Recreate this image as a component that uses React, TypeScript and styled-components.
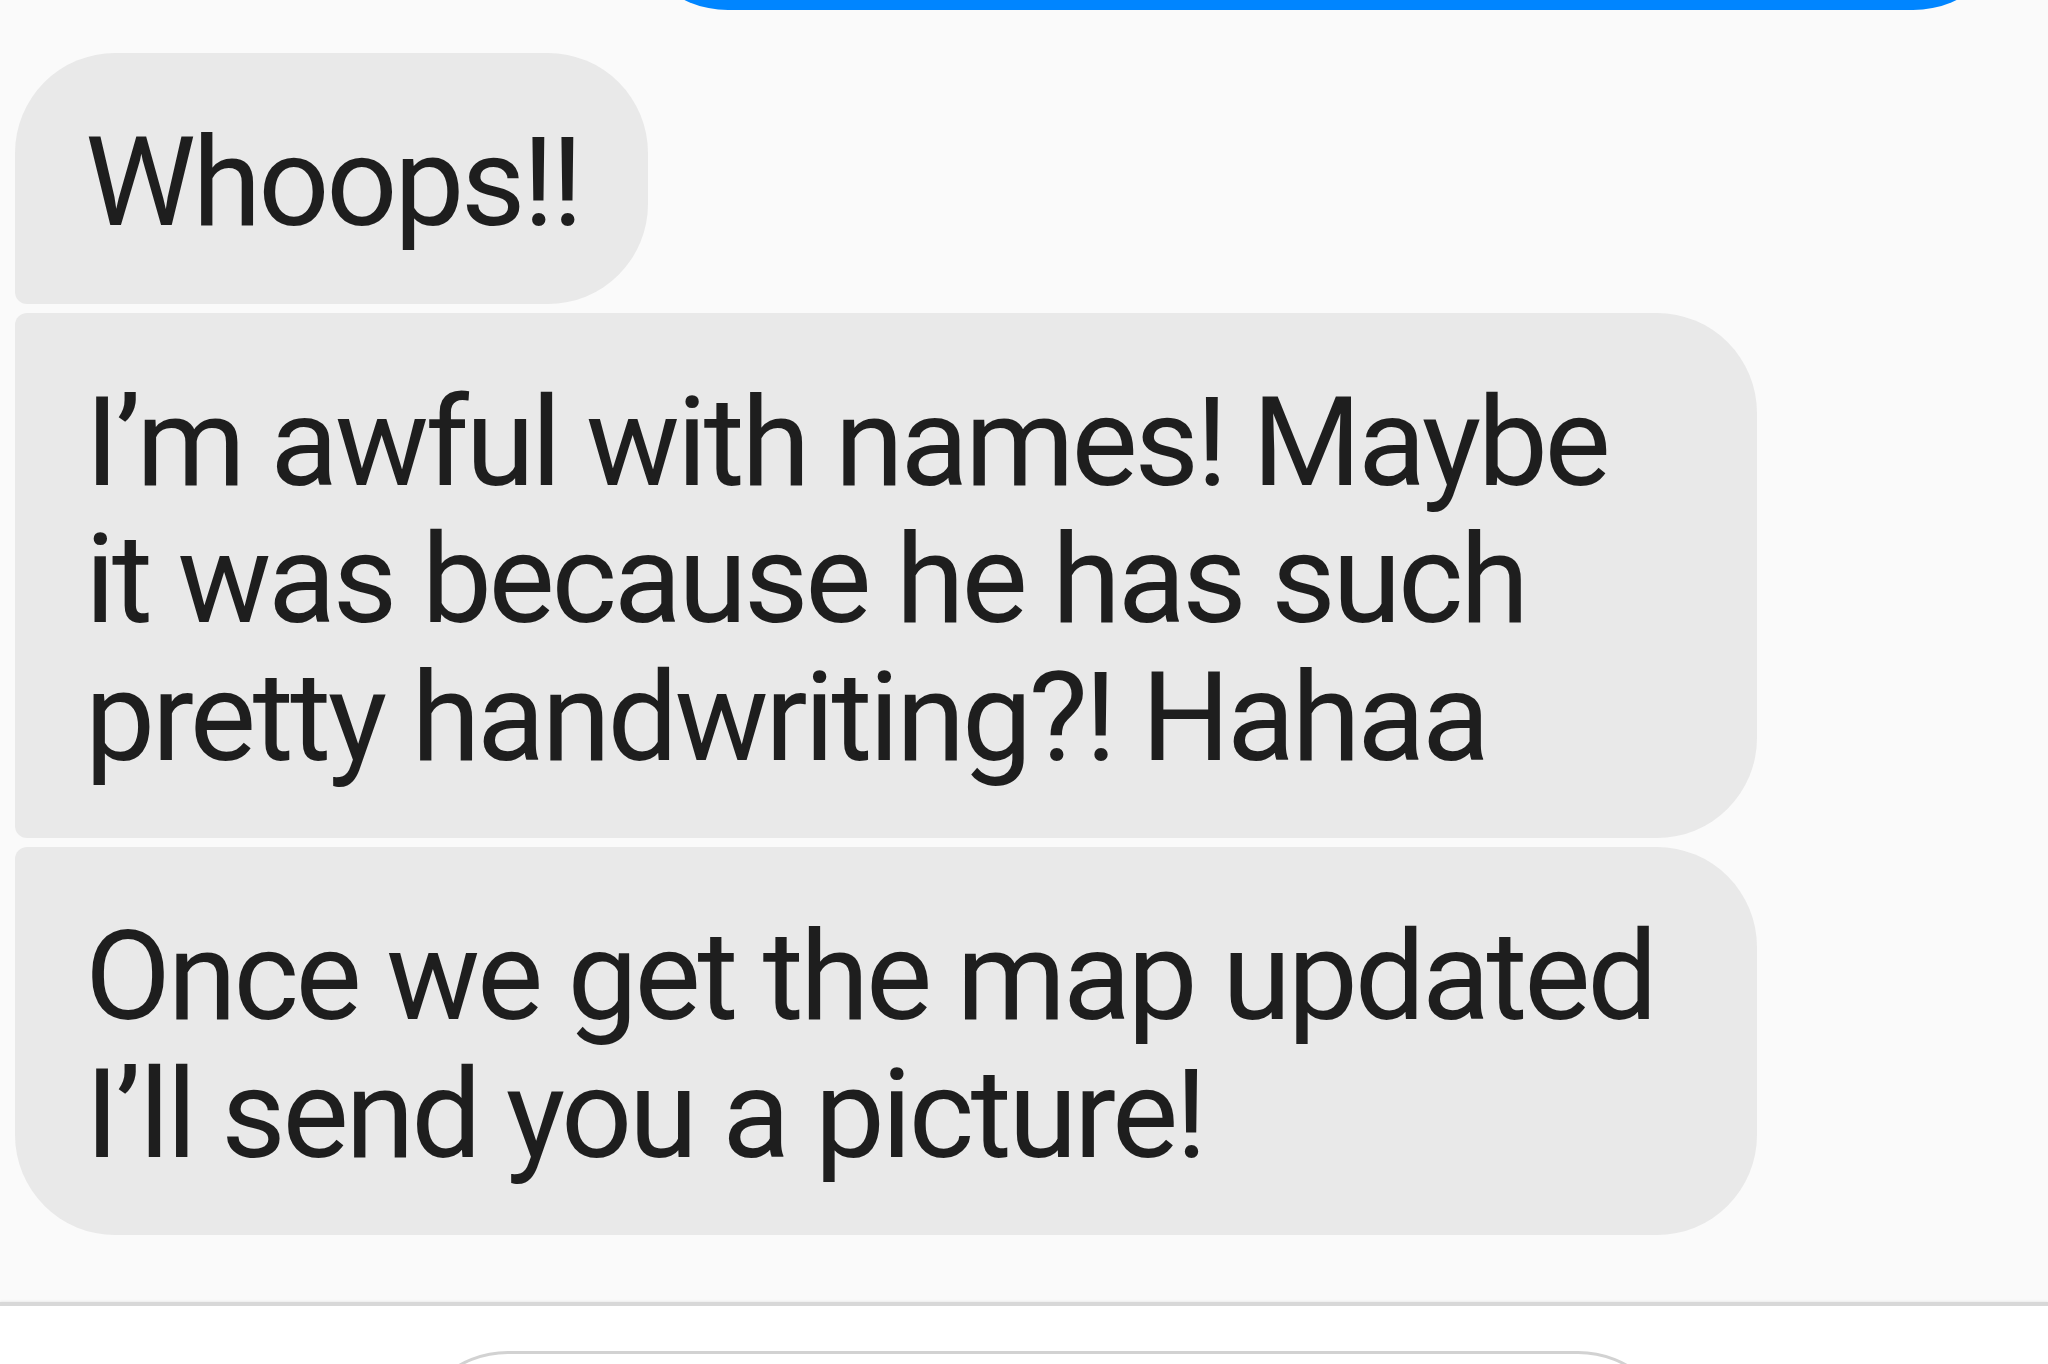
import React from 'react';
import styled, { createGlobalStyle } from 'styled-components';

type Message = {
  id: number;
  text: string;
};

const incoming: Message[] = [
  { id: 0, text: 'Whoops!!' },
  {
    id: 1,
    text: 'I’m awful with names! Maybe it was because he has such pretty handwriting?! Hahaa',
  },
  { id: 2, text: 'Once we get the map updated I’ll send you a picture!' },
];

const GlobalStyle = createGlobalStyle`
  html, body {
    margin: 0;
    padding: 0;
    background: #fafafa;
  }
  body {
    font-family: Roboto, "Noto Sans", "Liberation Sans", sans-serif;
  }
`;

type Side = 'in' | 'out';
type Pos = 'first' | 'middle' | 'last' | 'single';

const BIG = 100;
const SMALL = 12;

// top-left / bottom-left corners change with the place in a group
const leftCorners = (pos: Pos): [number, number] => {
  switch (pos) {
    case 'first':
      return [BIG, SMALL];
    case 'middle':
      return [SMALL, SMALL];
    case 'last':
      return [SMALL, BIG];
    default:
      return [BIG, BIG];
  }
};

const App = () => {
  return (
    <>
      <GlobalStyle />
      <S.Screen>
        <S.Thread>
          <S.Group $side="out">
            <S.OutBubble />
          </S.Group>
          <S.Group $side="in">
            {incoming.map((msg, i) => (
              <S.Bubble
                key={msg.id}
                $pos={i === 0 ? 'first' : i === incoming.length - 1 ? 'last' : 'middle'}
              >
                {msg.text}
              </S.Bubble>
            ))}
          </S.Group>
        </S.Thread>
        <S.Composer>
          <S.InputBox />
        </S.Composer>
      </S.Screen>
    </>
  );
};

const S = {
  Screen: styled.div`
    width: 2048px;
    height: 1364px;
    overflow: hidden;
    display: flex;
    flex-direction: column;
  `,
  Thread: styled.div`
    height: 1302px;
    flex-shrink: 0;
    overflow: hidden;
    background: #fafafa;
    display: flex;
    flex-direction: column;
    justify-content: flex-end;
    gap: 43px;
    padding-bottom: 67px;
    box-sizing: border-box;
  `,
  Group: styled.div<{ $side: Side }>`
    display: flex;
    flex-direction: column;
    gap: 9px;
    align-items: ${(p) => (p.$side === 'in' ? 'flex-start' : 'flex-end')};
    padding: ${(p) => (p.$side === 'in' ? '0 0 0 15px' : '0 35px 0 0')};
  `,
  Bubble: styled.div<{ $pos: Pos }>`
    box-sizing: border-box;
    max-width: 1742px;
    padding: 61px 68px 52px 70px;
    font-size: 125px;
    line-height: 137.5px;
    letter-spacing: -3.3px;
    color: #1e1e1e;
    background: #e9e9e9;
    border-radius: ${(p) => {
      const [tl, bl] = leftCorners(p.$pos);
      return `${tl}px ${BIG}px ${BIG}px ${bl}px`;
    }};
  `,
  OutBubble: styled.div`
    width: 1385px;
    height: 300px;
    flex-shrink: 0;
    background: #0085ff;
    border-radius: ${BIG}px;
  `,
  Composer: styled.div`
    flex: 1;
    background: #ffffff;
    border-top: 4px solid #d8d8d8;
    box-shadow: 0 -1px 2px rgba(0, 0, 0, 0.06);
    display: flex;
    justify-content: center;
    padding-top: 45px;
  `,
  InputBox: styled.div`
    width: 1270px;
    height: 200px;
    margin-left: 38px;
    flex-shrink: 0;
    box-sizing: border-box;
    border: 3px solid #d2d2d2;
    border-radius: 100px;
    background: #ffffff;
  `,
};

export default App;
